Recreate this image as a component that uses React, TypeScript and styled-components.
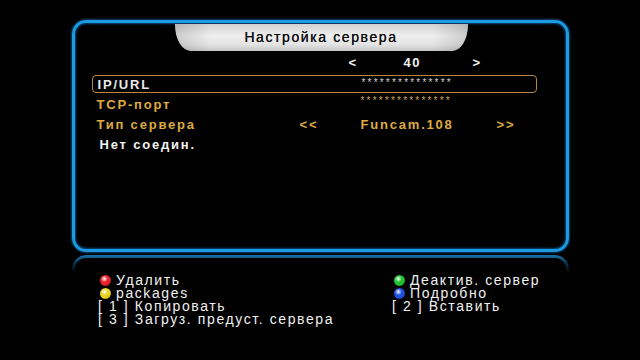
import React from "react";
import styled, { createGlobalStyle } from "styled-components";

const Global = createGlobalStyle`
  html, body { margin: 0; padding: 0; background: #000; }
  body { width: 640px; height: 360px; overflow: hidden; font-family: "Liberation Sans", Arial, sans-serif; }
`;

const Screen = styled.div`
  width: 640px;
  height: 360px;
  background: #000;
  display: flex;
  flex-direction: column;
  align-items: center;
  padding-top: 20px;
  box-sizing: border-box;
`;

const Panel = styled.div`
  width: 497px;
  height: 232px;
  box-sizing: border-box;
  border: 3px solid #1c9ae2;
  border-radius: 14px;
  box-shadow: inset 0 0 2px 1px rgba(10, 80, 140, 0.9), 0 0 2px 1px rgba(20, 110, 180, 0.6);
  display: flex;
  flex-direction: column;
  padding: 0 29px 0 17px;
`;

const Tab = styled.div`
  align-self: flex-start;
  margin-left: 83px;
  margin-top: 1px;
  width: 293px;
  height: 27px;
  border-radius: 0 0 16px 16px / 0 0 26px 26px;
  background: linear-gradient(90deg, rgba(0,0,0,0.14) 0%, rgba(0,0,0,0) 12%, rgba(0,0,0,0) 88%, rgba(0,0,0,0.14) 100%),
    linear-gradient(180deg, #d2d2d2 0%, #eeeeee 45%, #e4e4e4 75%, #c6c6c6 100%);
  color: #111;
  font-size: 14px;
  letter-spacing: 1.6px;
  line-height: 27px;
  text-align: center;
  text-shadow: 0 0 0.4px #111;
`;

const PageRow = styled.div`
  height: 23px;
  display: flex;
  align-items: center;
  padding-left: 257px;
  color: #f2f2f2;
  font-size: 13px;
  font-weight: bold;
  letter-spacing: 1.6px;
`;

const PageCell = styled.span<{ $w: number }>`
  width: ${(p) => p.$w}px;
`;

const Row = styled.div<{ $selected?: boolean }>`
  display: grid;
  grid-template-columns: 203px 61px 136px 1fr;
  align-items: center;
  box-sizing: border-box;
  height: ${(p) => (p.$selected ? "18px" : "20px")};
  margin: ${(p) => (p.$selected ? "1px 0" : "0")};
  padding-left: 5px;
  border: ${(p) => (p.$selected ? "1px solid #b38d3a" : "none")};
  border-radius: 4px;
  font-size: 13px;
  font-weight: bold;
  letter-spacing: 1.8px;
  color: ${(p) => (p.$selected ? "#eaeaea" : "#deac3e")};
`;

const Stars = styled.span<{ $gold?: boolean }>`
  font-size: 10px;
  font-weight: normal;
  letter-spacing: 2.2px;
  color: ${(p) => (p.$gold ? "#c9a557" : "#d0d0d0")};
  align-self: start;
  margin-top: 1px;
  grid-column: 3;
`;

const Status = styled.div`
  height: 20px;
  display: flex;
  align-items: center;
  padding-left: 8px;
  color: #f2f2f2;
  font-size: 13px;
  font-weight: bold;
  letter-spacing: 1.8px;
`;

const Reflection = styled.div`
  width: 497px;
  height: 18px;
  margin-top: 3px;
  box-sizing: border-box;
  border: 3px solid #1c9ae2;
  border-bottom: none;
  border-radius: 14px 14px 0 0;
  opacity: 0.75;
  -webkit-mask-image: linear-gradient(180deg, #000 0%, rgba(0,0,0,0.4) 50%, transparent 100%);
  mask-image: linear-gradient(180deg, #000 0%, rgba(0,0,0,0.4) 50%, transparent 100%);
`;

const Footer = styled.div`
  align-self: stretch;
  display: grid;
  grid-template-columns: 294px 1fr;
  grid-template-rows: 11px 14px 13px 13px;
  padding-left: 98px;
  margin-top: 2px;
  color: #f0f0f0;
  font-size: 14px;
  letter-spacing: 1.6px;
`;

const FooterItem = styled.div`
  display: flex;
  align-items: center;
  white-space: nowrap;
  line-height: 11px;
`;

const Dot = styled.span<{ $c: string }>`
  display: inline-block;
  flex: none;
  width: 11px;
  height: 11px;
  border-radius: 50%;
  margin: 0 5px 0 2px;
  background: radial-gradient(circle at 40% 35%, #ffffff 0%, ${(p) => p.$c} 35%, ${(p) => p.$c} 60%, rgba(0,0,0,0.6) 110%);
`;

export default function App() {
  return (
    <>
      <Global />
      <Screen>
        <Panel>
          <Tab>Настройка сервера</Tab>
          <PageRow>
            <PageCell $w={55}>&lt;</PageCell>
            <PageCell $w={69}>40</PageCell>
            <PageCell $w={10}>&gt;</PageCell>
          </PageRow>
          <Row $selected>
            <span>IP/URL</span>
            <Stars>***************</Stars>
          </Row>
          <Row>
            <span>TCP-порт</span>
            <Stars $gold>***************</Stars>
          </Row>
          <Row>
            <span>Тип сервера</span>
            <span>&lt;&lt;</span>
            <span>Funcam.108</span>
            <span>&gt;&gt;</span>
          </Row>
          <Status>Нет соедин.</Status>
        </Panel>
        <Reflection />
        <Footer>
          <FooterItem><Dot $c="#e8202a" />Удалить</FooterItem>
          <FooterItem><Dot $c="#22c030" />Деактив. сервер</FooterItem>
          <FooterItem><Dot $c="#e8d020" />packages</FooterItem>
          <FooterItem><Dot $c="#2050e0" />Подробно</FooterItem>
          <FooterItem>[ 1 ] Копировать</FooterItem>
          <FooterItem>[ 2 ] Вставить</FooterItem>
          <FooterItem>[ 3 ] Загруз. предуст. сервера</FooterItem>
        </Footer>
      </Screen>
    </>
  );
}
